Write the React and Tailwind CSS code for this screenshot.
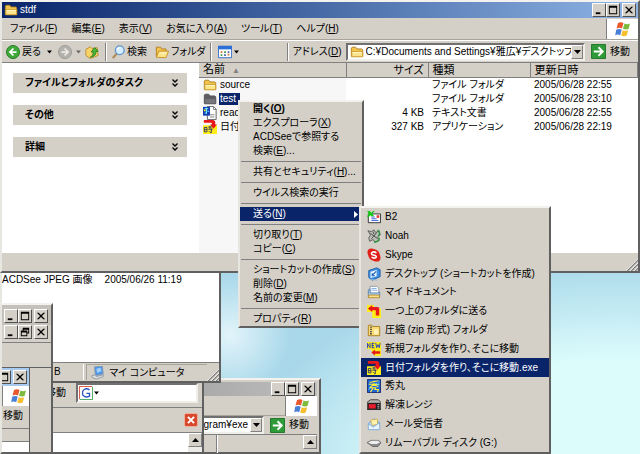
import { Fragment } from "react";
import clsx from "clsx";

const menus = [
	"ファイル(&F)",
	"編集(&E)",
	"表示(&V)",
	"お気に入り(&A)",
	"ツール(&T)",
	"ヘルプ(&H)",
];

const tasks = ["ファイルとフォルダのタスク", "その他", "詳細"];

const files = [
	{ name: "source", icon: "folder", size: "", type: "ファイル フォルダ", date: "2005/06/28 22:55" },
	{ name: "test", icon: "selected", size: "", type: "ファイル フォルダ", date: "2005/06/28 23:10" },
	{ name: "readme", icon: "text", size: "4 KB", type: "テキスト文書", date: "2005/06/28 22:55" },
	{ name: "日付", icon: "date", size: "327 KB", type: "アプリケーション", date: "2005/06/28 22:19" },
];

const contextMenu = [
	["開く(&O)", "エクスプローラ(&X)", "ACDSeeで参照する", "検索(&E)..."],
	["共有とセキュリティ(&H)..."],
	["ウイルス検索の実行"],
	["送る(&N)"],
	["切り取り(&T)", "コピー(&C)"],
	["ショートカットの作成(&S)", "削除(&D)", "名前の変更(&M)"],
	["プロパティ(&R)"],
];

const sendTo = [
	{ label: "B2", icon: "mail" },
	{ label: "Noah", icon: "noah" },
	{ label: "Skype", icon: "skype" },
	{ label: "デスクトップ (ショートカットを作成)", icon: "desktop" },
	{ label: "マイ ドキュメント", icon: "documents" },
	{ label: "一つ上のフォルダに送る", icon: "up" },
	{ label: "圧縮 (zip 形式) フォルダ", icon: "zip" },
	{ label: "新規フォルダを作り、そこに移動", icon: "new" },
	{ label: "日付フォルダを作り、そこに移動.exe", icon: "date", active: true },
	{ label: "秀丸", icon: "hidemaru" },
	{ label: "解凍レンジ", icon: "range" },
	{ label: "メール受信者", icon: "recipient" },
	{ label: "リムーバブル ディスク (G:)", icon: "disk" },
];

const raised =
	"border border-t-white border-l-white border-r-[#808080] border-b-[#808080] bg-[#d4d0c8]";
const sunken =
	"border-2 border-t-[#707070] border-l-[#707070] border-r-[#f0eee8] border-b-[#f0eee8] bg-white";
const frame =
	"absolute flex flex-col bg-[#d4d0c8] border-2 border-t-[#f4f2ee] border-l-[#e8e6e0] border-r-[#606060] border-b-[#606060]";

const folderShape = (
	<>
		<path d="M1.5 13V3.5l1-1h4l1.5 2h5.5l1 1V13z" fill="#f3c44c" stroke="#a87a1c" />
		<path d="M2 13.5V7.5h12.5v6z" fill="#fde58c" stroke="#c9982c" />
		<path d="M3 8.5h10.5" stroke="#fff8cf" />
	</>
);

const icons = {
	folder: folderShape,
	selected: (
		<>
			<path d="M1.5 13V3.5l1-1h4l1.5 2h5.5l1 1V13z" fill="#5d5d62" stroke="#505058" />
			<path d="M2 13.5V7.5h12.5v6z" fill="#75757a" stroke="#5d5d62" />
		</>
	),
	text: (
		<>
			<path d="M5 .5h7l3 3v12H5z" fill="#fff" stroke="#555" />
			<path d="M8 10h5M8 12.500h5M12 1v3h3" stroke="#777" fill="none" />
			<path d="M0 1h8v10H0z" fill="#143cb4" />
			<path d="M2 3h4M4 2v7M2 8h2M5 6h2" stroke="#7ff" />
			<path d="M1 4h2v2H1z" fill="#ff0" />
		</>
	),
	date: (
		<>
			<path d="M0 6h16v10H0z" fill="#ffee18" />
			<path d="M1 0h10q3 0 3 3v2h2l-4 5-4-5h2V3H1z" fill="#e81818" />
			<path d="M1.500 8.500h3v5h-3zM1.500 11h3M6 8h4M8 7v3M6 10.500h5M9.500 10v4.500H8M6.500 12.500l1 1" stroke="#222870" fill="none" />
		</>
	),
	mail: (
		<>
			<path d="M1.500 4.500h14v10h-14z" fill="#fff" stroke="#222" />
			<path d="M11 6h3v3h-3z" fill="#e33" />
			<path d="M5 8h4M5 10h6M5 12h8" stroke="#3355dd" />
			<path d="M0 1h3l2 2 2-2h2L6 4l2 3H5L4 6 2 8H0l2-4z" fill="#14c814" />
		</>
	),
	noah: (
		<>
			<path d="M1 2l4 1 3-2 2 3 4-2 1 5-3 2 2 4-5 2-2-3-4 2-1-4 2-3z" fill="#b9bdb4" stroke="#555" />
			<path d="M4 5l4 3-3 3M11 4L8 8l4 3M7 3l1 3" stroke="#444" fill="none" />
			<path d="M12 1q4 4 1 7M14 10q0 5-6 5" stroke="#249a3c" strokeWidth="1.5" fill="none" />
		</>
	),
	skype: (
		<>
			<circle cx="5" cy="5" r="4.500" fill="#e02018" />
			<circle cx="11" cy="11" r="4.500" fill="#e02018" />
			<circle cx="8" cy="8" r="6.500" fill="#e02018" />
			<path d="M10.800 5.500Q8 3.600 6 5t.3 2.700l3 .8q2 1 .8 2.400-2 1.500-4.900-.4" stroke="#fff" strokeWidth="1.800" fill="none" />
		</>
	),
	desktop: (
		<>
			<path d="M2 4l9-3 4 2v8l-9 4-4-3z" fill="#3b8ee0" stroke="#1e57a4" />
			<path d="M4 5.500l7-2v7l-7 2z" fill="#e8f4ff" />
			<path d="M5.500 10l5-5M6 7v3h3" stroke="#2264b8" strokeWidth="1.300" fill="none" />
			<path d="M3 14l9 1" stroke="#8fb7dc" />
		</>
	),
	documents: (
		<>
			<path d="M3.500 1.500h8l2 2v8h-10z" fill="#fff" stroke="#8896a8" />
			<path d="M5 4h6M5 6h7" stroke="#7aa7dc" />
			<path d="M1.500 13.500v-8l2-1V9h9l2-1v5.500z" fill="#a9cbee" stroke="#5a80ac" />
			<path d="M1.500 14.500l.5-3h12l.5 3z" fill="#fbe08a" stroke="#b58a2c" />
		</>
	),
	up: (
		<>
			<path d="M0 1h8v4h8v11H6V9H0z" fill="#ffee18" />
			<path d="M1 5l5-4v2.500h6q2 0 2 2V13h-4V7H6v2z" fill="#e81818" />
		</>
	),
	zip: (
		<>
			<path d="M1.500 14.500v-12h4l1 1.500h8v10.500z" fill="#fbdc74" stroke="#a87a1c" />
			<path d="M4.500 4v9" stroke="#444" strokeWidth="2" strokeDasharray="1.500 1" />
			<path d="M8 7h5v6H8z" fill="#fff1b4" />
		</>
	),
	new: (
		<>
			<path d="M0 0h16v8H0z" fill="#ffee18" />
			<path d="M4 8h12v8H9z" fill="#ffee18" />
			<path d="M.5 7V1.500l3 5V1M5.500 1.500h3M5.500 4h2.500M5.500 6.500h3M6 1v6M10 1l1 5.500L12.500 3 14 6.500 15 1" stroke="#1834c8" fill="none" />
			<path d="M5 12l4-3.500v2h6v3H9v2z" fill="#e81818" />
		</>
	),
	hidemaru: (
		<>
			<path d="M.5.500h15v15H.5z" fill="#2066d8" stroke="#102060" />
			<path d="M3 4l10-2M8 2v6M2 6h12M8 6l-5 4M8 6l5 3M4 10h6l-1 2h4l-1 3M7 10l-3 5" stroke="#ffef38" strokeWidth="1.300" fill="none" />
			<path d="M2 12l2-2M13 4l1-1M10 5l3 2" stroke="#7ff" />
		</>
	),
	range: (
		<>
			<path d="M0 5l4-3h9l3 3v8H0z" fill="#b8b4b0" stroke="#333" />
			<path d="M.5 5.500h15v8H.5z" fill="#222" />
			<path d="M2 7h8v5H2z" fill="#e81c2c" />
			<path d="M12 7.500h2M12 9.500h2M12 11.500h2M1 15h3M12 15h3" stroke="#ccc" />
		</>
	),
	recipient: (
		<>
			<path d="M1.500 7.500L8 2l6.500 4.500-2 8-9-1z" fill="#b9dcf6" stroke="#5d93c4" />
			<path d="M4 3.500l8-1v6l-6 1z" fill="#fff3ae" stroke="#cfae54" />
			<path d="M1.500 7.500l5.500 4 7.500-5v8h-13z" fill="#e8f5ff" stroke="#7aa9d2" />
		</>
	),
	disk: (
		<>
			<path d="M0 7.500L5 5h8l3 2.500-3.500 4.500h-6z" fill="#8a8a8a" stroke="#666" />
			<path d="M1 7.500l4.500-2h7l2.500 2-4 1.500H5z" fill="#efefef" />
		</>
	),
	back: (
		<>
			<circle cx="8" cy="8" r="7.500" fill="#3fa83a" stroke="#24781f" />
			<path d="M8.500 4L4.500 8l4 4M5 8h7" stroke="#fff" strokeWidth="2" fill="none" />
		</>
	),
	forward: (
		<>
			<circle cx="8" cy="8" r="7.500" fill="#b4b2ae" stroke="#9a9894" />
			<path d="M7.500 4l4 4-4 4M4 8h7" stroke="#ece9e2" strokeWidth="2" fill="none" />
		</>
	),
	parent: (
		<>
			<path d="M1 5l5-3 2 2 6-1 1 9-9 3.500L1 12z" fill="#f8d468" stroke="#b58a2c" />
			<path d="M6 14q4-2 3.500-6H7l4-5 4 4-2.500.5Q13 13 6 14z" fill="#4ab83c" stroke="#247a1c" />
		</>
	),
	search: (
		<>
			<path d="M7 9.500L2 15" stroke="#b08a58" strokeWidth="2.500" />
			<circle cx="10" cy="6" r="5" fill="#d3ecff" stroke="#5f94d0" strokeWidth="1.500" />
			<path d="M7.500 5q1-2 3-2" stroke="#fff" strokeWidth="1.500" fill="none" />
		</>
	),
	openFolder: (
		<>
			<path d="M1.500 13.500v-11h5l1 2h5v3" fill="#f3c44c" stroke="#b07c1c" />
			<path d="M1.500 14l3-7h11l-3 7.500z" fill="#fde58c" stroke="#c88a1c" />
			<path d="M6 9h7" stroke="#fffbe0" />
		</>
	),
	views: (
		<>
			<path d="M.5 1.500h15v13H.5z" fill="#fff" stroke="#2464c8" />
			<path d="M0 1h16v4H0z" fill="#2a6fd8" />
			<path d="M3 7h2v2H3zM11 10h2v2h-2z" fill="#d8742c" />
			<path d="M7 7h2v2H7zM3 10.500h2v2H3z" fill="#3c9c4c" />
			<path d="M11 7h2v2h-2zM7 10.500h2v2H7z" fill="#4466aa" />
		</>
	),
	go: (
		<>
			<path d="M.5.500h15v15H.5z" fill="#2f9a38" stroke="#1e7427" />
			<path d="M8 3.500L12.500 8 8 12.500M3 8h9" stroke="#fff" strokeWidth="2" fill="none" />
		</>
	),
	flag: (
		<>
			<path d="M3 2q3-1.500 5.500 0L7 7.500q-2.500-1.500-5.500 0z" fill="#e8582c" />
			<path d="M9.500 2.500q2.500 1.500 5.500 0L13.500 8Q11 9 8 7.800z" fill="#7cba3c" />
			<path d="M1.200 8.800q3-1.500 5.500 0l-1.500 5.500q-2.500-1.500-5 0z" fill="#4a7fd8" />
			<path d="M7.700 9.200q2.500 1.300 5.500 0l-1.500 5.300q-2.500 1.300-5.500 0z" fill="#f6bf30" />
		</>
	),
	computer: (
		<>
			<path d="M4 1l9-1 1 9-9 2z" fill="#4c97e8" stroke="#8a98a8" />
			<path d="M6 3l5-1 1 4-5 2z" fill="#9fd0ff" />
			<path d="M1 11l4-1 1 2 8-2v2l-8 3-5-2z" fill="#dcdcd8" stroke="#8a98a8" />
		</>
	),
	google: (
		<>
			<path d="M.5 15V.5H15" stroke="#d33a2c" fill="none" />
			<path d="M15.500 1v14.500H1" stroke="#2c9c4c" fill="none" />
			<path d="M12 4.500Q9 2 6 4t-1.500 6.500Q7 14 12 11.500V8.500H8.500" stroke="#2858c0" strokeWidth="1.500" fill="none" />
		</>
	),
	close: (
		<>
			<rect x=".5" y=".5" width="15" height="15" rx="2" fill="#d8482c" stroke="#f4b8a4" />
			<path d="M4.500 4.500l7 7M11.500 4.500l-7 7" stroke="#fff" strokeWidth="2.200" />
		</>
	),
};

function Icon({ name, className = "size-3.5" }) {
	return (
		<svg viewBox="0 0 16 16" className={clsx("shrink-0", className)} aria-hidden="true">
			{icons[name]}
		</svg>
	);
}

// "&" marks the access key, as in Windows resource files
function Label({ text }) {
	const at = text.indexOf("&");
	if (at < 0) return <span>{text}</span>;
	return (
		<span>
			{text.slice(0, at)}
			<span className="underline">{text[at + 1]}</span>
			{text.slice(at + 2)}
		</span>
	);
}

function Arrow({ up, className = "w-[7px]" }) {
	return (
		<svg viewBox="0 0 7 4" className={clsx("h-1 shrink-0", className)} aria-hidden="true">
			<path d={up ? "M0 4l3.500-4L7 4z" : "M0 0l3.500 4L7 0z"} fill="#000" />
		</svg>
	);
}

const glyphs = {
	min: "M3 9h5v2H3z",
	max: "M2 2h9v9H2zM3 4v6h7V4z",
	restore: "M4 2h7v6H9v3H2V5h2zM5 4v1h4v2h1V4zM3 7v3h5V7z",
	close: "M2 3h2l2.500 2.500L9 3h2L7.500 6.500 11 10H9L6.500 7.500 4 10H2l3.500-3.500z",
};

function CaptionButtons({ middle = "max" }) {
	return (
		<div className="flex shrink-0">
			{["min", middle, "close"].map((kind) => (
				<button
					key={kind}
					aria-label={kind}
					className={clsx(
						"size-3.5 border border-t-white border-l-white border-r-[#505050] border-b-[#505050] bg-[#d4d0c8]",
						kind === "close" && "ml-0.5"
					)}>
					<svg viewBox="0 0 13 13" className="size-full">
						<path d={glyphs[kind]} fillRule="evenodd" />
					</svg>
				</button>
			))}
		</div>
	);
}

function LogoBox() {
	return (
		<div className="w-8 h-5 shrink-0 ml-auto bg-white border-l border-[#808080] flex items-center justify-center">
			<Icon name="flag" className="size-4" />
		</div>
	);
}

function GoButton() {
	return (
		<button className="flex items-center gap-1 shrink-0">
			<Icon name="go" className="size-[15px]" />
			移動
		</button>
	);
}

function Divider() {
	return <div className="w-0.5 h-[18px] shrink-0 border-l border-[#808080] bg-white" />;
}

function Grip() {
	return (
		<svg viewBox="0 0 12 12" className="size-3 shrink-0 self-end ml-auto" aria-hidden="true">
			<path d="M1 12L12 1M5 12l7-7M9 12l3-3" stroke="#808080" strokeWidth="1.500" />
			<path d="M0 12L12 0M4 12l8-8M8 12l4-4" stroke="#fff" strokeWidth=".7" />
		</svg>
	);
}

function ScrollUp() {
	return (
		<button aria-label="上へスクロール" className={clsx(raised, "size-3.5 shrink-0 flex items-center justify-center")}>
			<Arrow up />
		</button>
	);
}

function AddressBox({ value, icon, className }) {
	return (
		<div className={clsx(sunken, "flex items-center h-[18px] min-w-0", className)}>
			{icon && <Icon name="folder" className="size-3.5 mx-0.5" />}
			<input
				aria-label="アドレス"
				defaultValue={value}
				className={clsx("flex-1 min-w-0 outline-none", !icon && "text-right pr-0.5")}
			/>
			<button aria-label="履歴" className={clsx(raised, "w-3 h-full shrink-0 flex items-center justify-center")}>
				<Arrow />
			</button>
		</div>
	);
}

function Explorer() {
	return (
		<main className={clsx(frame, "left-0 right-0 top-0")}>
			<header className="flex items-center h-4 px-0.5 bg-linear-to-r from-[#0a246a] to-[#8fb4e4] text-white">
				<Icon name="folder" />
				<h1 className="ml-0.5 flex-1">stdf</h1>
				<CaptionButtons />
			</header>
			<nav className="flex items-center h-[22px] pl-2 gap-3.5 border-b border-[#a8a49c]">
				{menus.map((menu) => (
					<button key={menu}>
						<Label text={menu} />
					</button>
				))}
				<LogoBox />
			</nav>
			<div className="flex items-center h-[22px] pl-1 pr-2 border-t border-white">
				<button className="flex items-center gap-0.5">
					<Icon name="back" /> 戻る
				</button>
				<span className="mx-1.5"><Arrow className="w-[5px]" /></span>
				<button aria-label="進む"><Icon name="forward" /></button>
				<span className="mx-1 opacity-50"><Arrow className="w-[5px]" /></span>
				<button aria-label="上へ" className="mr-1.5"><Icon name="parent" /></button>
				<Divider />
				<button className="flex items-center gap-0.5 mx-1">
					<Icon name="search" /> 検索
				</button>
				<button className="flex items-center gap-0.5 mx-1">
					<Icon name="openFolder" /> フォルダ
				</button>
				<Divider />
				<button aria-label="表示" className="flex items-center gap-0.5 ml-1.5">
					<Icon name="views" /> <Arrow className="w-[5px]" />
				</button>
				<div className="flex-1 flex items-center ml-12 gap-1">
					<Divider />
					<Label text="アドレス(&D)" />
					<AddressBox
						icon
						className="flex-1"
						value="C:¥Documents and Settings¥雅広¥デスクトップ¥stdf"
					/>
				</div>
				<div className="ml-1.5"><GoButton /></div>
			</div>
			<div className="flex h-[191px] bg-white border-t border-[#808080]">
				<aside className="w-[197px] shrink-0 pt-2.5 pl-[11px] pr-3 flex flex-col gap-3">
					{tasks.map((task) => (
						<button
							key={task}
							className="flex items-center justify-between h-5 pl-3 pr-2 bg-[#d4d0c8] font-bold">
							{task}
							<svg viewBox="0 0 8 8" className="size-2" aria-hidden="true">
								<path d="M1.500.500L4 3 6.500.500M1.500 4.500L4 7l2.500-2.500" stroke="#000" strokeWidth="1.300" fill="none" />
							</svg>
						</button>
					))}
				</aside>
				<div className="flex-1 bg-linear-to-r from-[#f7f7f7] from-[147px] to-white to-[147px]">
					<table className="w-full table-fixed border-collapse">
						<thead>
							<tr className="bg-[#d4d0c8] text-left text-[11px] leading-3">
								<th className="w-[147px] h-[13px] pl-1 font-normal border-r border-b border-[#808080]">
									名前 <span className="text-[#808080] text-[8px] ml-1">▲</span>
								</th>
								<th className="w-[82px] pr-1 font-normal text-right border-r border-b border-[#808080]">サイズ</th>
								<th className="w-[102px] pl-1 font-normal border-r border-b border-[#808080]">種類</th>
								<th className="pl-1 font-normal border-r border-b border-[#808080]">更新日時</th>
							</tr>
						</thead>
						<tbody>
							{files.map((file) => (
								<tr key={file.name} className="h-3.5 leading-3">
									<td>
										<div className="flex items-center gap-0.5 pl-1">
											<Icon name={file.icon} />
											<span
												className={clsx(
													"px-px",
													file.icon === "selected" &&
														"bg-[#0a246a] text-white pr-1"
												)}>
												{file.name}
											</span>
										</div>
									</td>
									<td className="text-right pr-1">{file.size}</td>
									<td className="pl-1">{file.type}</td>
									<td className="pl-1">{file.date}</td>
								</tr>
							))}
						</tbody>
					</table>
				</div>
			</div>
			<footer className="flex h-[18px]">
				<Grip />
			</footer>
		</main>
	);
}

function ContextMenu() {
	return (
		<div role="menu" className={clsx(frame, "left-[238px] top-[100px] w-[126px]")}>
			{contextMenu.map((group, index) => (
				<Fragment key={index}>
					{index > 0 && (
						<hr className="my-[3px] mx-px border-t-[#808080] h-px bg-white" />
					)}
					{group.map((item) => {
						const open = item.startsWith("送る");
						return (
							<button
								key={item}
								role="menuitem"
								className={clsx(
									"flex items-center justify-between h-3.5 pl-[13px] pr-1 text-left",
									item.startsWith("開く") && "font-bold",
									open && "bg-[#0a246a] text-white"
								)}>
								<Label text={item} />
								{open && (
									<svg viewBox="0 0 4 7" className="w-1 h-[7px]" aria-hidden="true">
										<path d="M0 0l4 3.500L0 7z" fill="#fff" />
									</svg>
								)}
							</button>
						);
					})}
				</Fragment>
			))}
		</div>
	);
}

function SendToMenu() {
	return (
		<div role="menu" className={clsx(frame, "left-[359px] top-[206px] w-48 h-[248px]")}>
			{sendTo.map((item) => (
				<button
					key={item.label}
					role="menuitem"
					className={clsx(
						"flex-1 min-h-0 flex items-center gap-1 pl-1.5 text-left",
						item.active && "bg-[#0a246a] text-white"
					)}>
					<Icon name={item.icon} />
					{item.label}
				</button>
			))}
		</div>
	);
}

function PictureWindow() {
	return (
		<section className={clsx(frame, "left-0 top-[262px] w-[221px] h-[121px]")}>
			<div className="flex-1 flex gap-3 pt-2.5 bg-white border-b border-[#808080]">
				<span>ACDSee JPEG 画像</span>
				<span>2005/06/26 11:19</span>
			</div>
			<footer className="flex items-center h-[18px] pl-12">
				<span className="w-9 pl-1 h-4 leading-4 border-r border-white">B</span>
				<span className="flex items-center gap-1 w-32 h-4 ml-0.5 pl-1 border-l border-t border-[#a8a49c]">
					<Icon name="computer" /> マイ コンピュータ
				</span>
				<Grip />
			</footer>
		</section>
	);
}

function SearchWindow() {
	return (
		<section className={clsx(frame, "left-0 top-[360px] bottom-0 w-[204px]")}>
			<div className="flex items-center h-[46px] pt-4 pl-11 pr-1 border-b border-[#808080]">
				<span className="shrink-0 mr-2.5">移動</span>
				<div className={clsx(sunken, "flex items-center flex-1 min-w-0 h-5")}>
					<Icon name="google" className="size-3.5 mx-px" />
					<Arrow className="w-[5px]" />
					<input aria-label="Google 検索" className="flex-1 min-w-0 outline-none" />
				</div>
			</div>
			<div className="flex items-center justify-end h-[25px] pr-1 border-b border-[#808080]">
				<button aria-label="閉じる"><Icon name="close" /></button>
			</div>
			<div className="flex flex-1 justify-end bg-white">
				<div className="bg-[#eceae6]"><ScrollUp /></div>
			</div>
		</section>
	);
}

function ProgramWindow() {
	return (
		<section className={clsx(frame, "left-[150px] top-[378px] bottom-0 w-[171px] pr-0.5")}>
			<div className="flex items-center justify-end h-[18px] pr-0.5 mt-0.5 bg-linear-to-r from-[#a0a0a0] to-[#c0c0c0]">
				<CaptionButtons />
			</div>
			<div className="flex h-5 border-b border-[#a8a49c]"><LogoBox /></div>
			<div className="flex items-center h-[22px] pr-2 gap-1.5">
				<AddressBox value="Program¥exe" className="flex-1" />
				<GoButton />
			</div>
			<div className="flex flex-1 justify-between pl-16 border-t border-[#808080]">
				<Divider />
				<ScrollUp />
			</div>
		</section>
	);
}

function ChildWindow() {
	return (
		<section className={clsx(frame, "left-0 top-[303px] bottom-0 w-[53px]")}>
			<div className="flex justify-end pt-1 pb-0.5 pr-[3px] bg-[#c4c1bb]">
				<CaptionButtons />
			</div>
			<div className="flex justify-end pr-[3px] pb-[3px] border-b border-[#808080]">
				<CaptionButtons middle="restore" />
			</div>
			<div className="flex flex-1 mt-6 border-t border-[#606060]">
				<div className="w-7 shrink-0 flex flex-col border-r border-[#606060] overflow-hidden">
					<div className="flex justify-end h-[18px] pt-0.5 pr-0.5 bg-[#a6caf0]">
						<CaptionButtons />
					</div>
					<LogoBox />
					<span className="h-[22px] leading-5 self-end pr-1.5">移動</span>
					<div className="h-3.5 border-y border-[#808080]" />
					<div className="flex-1 bg-white" />
				</div>
			</div>
		</section>
	);
}

export default function App() {
	return (
		<div className="relative h-screen overflow-hidden text-[10px] leading-3 text-black whitespace-nowrap font-['Liberation_Sans','Noto_Sans_CJK_JP',sans-serif] [font-feature-settings:'palt'] bg-[radial-gradient(circle_at_230px_335px,#e2f4fa_0,transparent_60px),radial-gradient(380px_220px_at_620px_480px,#dcfcfc_55%,transparent_100%),linear-gradient(#a9d8ea,#a9d8ea)]">
			<ProgramWindow />
			<SearchWindow />
			<PictureWindow />
			<ChildWindow />
			<Explorer />
			<ContextMenu />
			<SendToMenu />
		</div>
	);
}
